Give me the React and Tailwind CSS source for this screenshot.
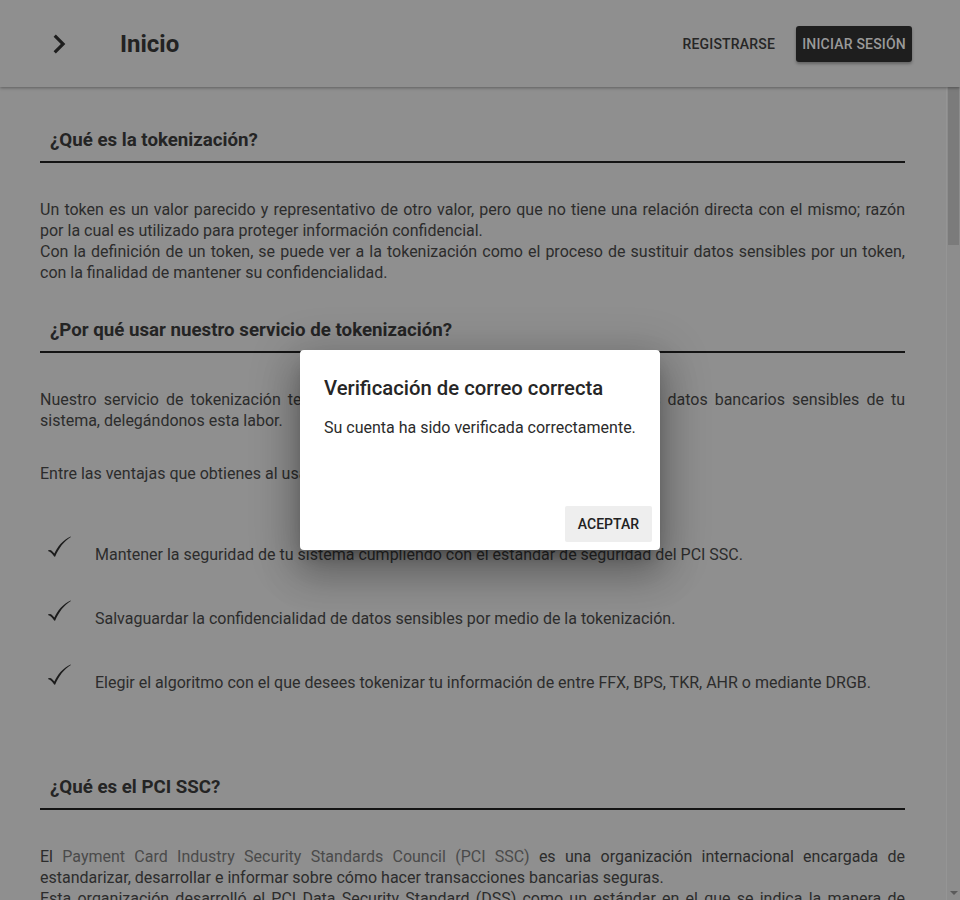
import React from "react";

const Check = () => (
  <svg width="26" height="22" viewBox="0 0 26 22" className="shrink-0">
    <path
      d="M1 14.5 C2.5 13.6 4 13.8 5.2 15.2 L7.4 17.6 C10.5 10.8 15.8 4.2 23.6 0.6 L23.9 1 C16.8 5.4 11.6 12.4 8.2 20.6 L7.4 20.8 C6 18.6 4.2 16 1 14.9 Z"
      fill="#1c1c1c"
    />
  </svg>
);

const Heading = ({ children, className = "" }) => (
  <div className={"border-b-2 border-[#141414] pl-[10px] pb-[9px] " + className}>
    <h2 className="text-[18.7px] leading-[24px] font-bold text-[#242424]">{children}</h2>
  </div>
);

const Item = ({ children }) => (
  <div className="flex items-end h-[64px]">
    <div className="w-[55px] pl-[7px] pb-[12px]">
      <Check />
    </div>
    <p className="leading-[21px] pb-[5px]">{children}</p>
  </div>
);

export default function App() {
  return (
    <div
      className="relative w-[960px] h-[900px] overflow-hidden bg-[#8f8f8f] text-[#2c2c2c] text-[16px]"
      style={{ fontFamily: "Roboto, 'Noto Sans', sans-serif" }}
    >
      <header className="relative z-10 h-[87px] flex items-center pt-[1px] px-[40px] bg-[#8f8f8f] shadow-[0_1px_3px_rgba(0,0,0,0.35)]">
        <svg width="38" height="38" viewBox="0 0 24 24">
          <path d="M10 6L8.59 7.41 13.17 12l-4.58 4.59L10 18l6-6z" fill="#1e1e1e" />
        </svg>
        <h1 className="ml-[42px] text-[24px] font-bold text-[#222]">Inicio</h1>
        <div className="ml-auto flex items-center gap-[13px] mr-[8px]">
          <button className="h-[36px] px-[8px] text-[14px] font-medium uppercase tracking-[0.2px] text-[#262626]">
            Registrarse
          </button>
          <button className="h-[36px] px-[6px] rounded-[3px] bg-[#1e1e1e] text-[14px] font-medium uppercase tracking-[0.2px] text-[#9a9a9a] shadow-[0_2px_3px_rgba(0,0,0,0.3)]">
            Iniciar sesión
          </button>
        </div>
      </header>

      <div className="flex h-[813px]">
        <main className="flex-1 pl-[40px] pr-[41px] pt-[41px] overflow-hidden">
          <Heading>¿Qué es la tokenización?</Heading>
          <p className="mt-[36px] leading-[21px] text-justify">
            Un token es un valor parecido y representativo de otro valor, pero que no tiene una relación directa con el
            mismo; razón por la cual es utilizado para proteger información confidencial.
            <br />
            Con la definición de un token, se puede ver a la tokenización como el proceso de sustituir datos sensibles
            por un token, con la finalidad de mantener su confidencialidad.
          </p>

          <Heading className="mt-[35px]">¿Por qué usar nuestro servicio de tokenización?</Heading>
          <p className="mt-[36px] leading-[21px] text-justify">
            Nuestro servicio de tokenización te permite evitar el almacenamiento propio de los datos bancarios
            sensibles de tu sistema, delegándonos esta labor.
          </p>
          <p className="mt-[32px] leading-[21px]">
            Entre las ventajas que obtienes al usar nuestro servicio se encuentran:
          </p>
          <div className="mt-[22px]">
            <Item>Mantener la seguridad de tu sistema cumpliendo con el estándar de seguridad del PCI SSC.</Item>
            <Item>Salvaguardar la confidencialidad de datos sensibles por medio de la tokenización.</Item>
            <Item>
              Elegir el algoritmo con el que desees tokenizar tu información de entre FFX, BPS, TKR, AHR o mediante
              DRGB.
            </Item>
          </div>

          <Heading className="mt-[77px]">¿Qué es el PCI SSC?</Heading>
          <p className="mt-[36px] leading-[21px] text-justify">
            El <span className="text-[#4a4a4a]">Payment Card Industry Security Standards Council (PCI SSC)</span> es
            una organización internacional encargada de estandarizar, desarrollar e informar sobre cómo hacer
            transacciones bancarias seguras.
            <br />
            Esta organización desarrolló el PCI Data Security Standard (DSS) como un estándar en el que se indica la
            manera de proteger los datos de los tarjetahabientes en cualquier sistema que los procese.
          </p>
        </main>

        <div className="w-[14px] flex flex-col border-l border-[#959595] bg-[#8d8d8d]">
          <div className="mx-[1px] h-[158px] bg-[#7b7b7b]"></div>
          <div className="flex-1"></div>
          <div className="h-[14px] flex items-center justify-center">
            <div className="w-0 h-0 border-l-[4px] border-r-[4px] border-t-[4px] border-l-transparent border-r-transparent border-t-[#5a5a5a]"></div>
          </div>
        </div>
      </div>

      <div className="absolute left-[300px] top-[350px] w-[360px] h-[200px] z-20 bg-white rounded-[4px] shadow-[0_11px_15px_-7px_rgba(0,0,0,0.3),0_24px_38px_3px_rgba(0,0,0,0.2),0_9px_46px_8px_rgba(0,0,0,0.18)] flex flex-col">
        <h3 className="px-[24px] pt-[22px] text-[20.3px] leading-[32px] font-medium text-[#262626]">
          Verificación de correo correcta
        </h3>
        <p className="px-[24px] mt-[12px] leading-[24px] text-[#2b2b2b]">Su cuenta ha sido verificada correctamente.</p>
        <div className="mt-auto flex justify-end p-[8px]">
          <button className="h-[36px] px-[13px] rounded-[2px] bg-[#eeeeee] text-[14px] font-medium uppercase text-[#222]">
            Aceptar
          </button>
        </div>
      </div>
    </div>
  );
}
